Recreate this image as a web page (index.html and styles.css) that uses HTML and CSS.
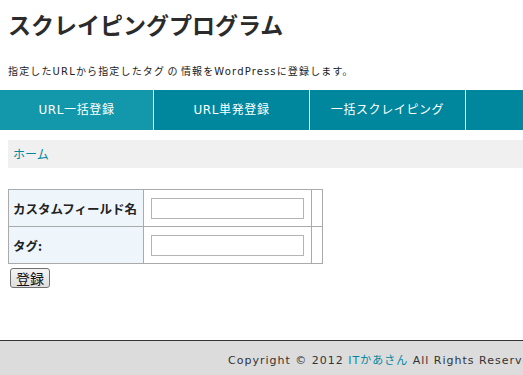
FILE: index.html
```html
<!DOCTYPE html>
<html lang="ja">
<head>
<meta charset="utf-8">
<title>スクレイピングプログラム</title>
<link rel="stylesheet" href="styles.css">
</head>
<body>
<header class="site-header">
  <h1 class="site-title">スクレイピングプログラム</h1>
  <p class="site-desc">指定したURLから指定したタグ の 情報をWordPressに登録します。</p>
</header>
<nav class="gnav">
  <a class="gnav-item is-current" href="#">URL一括登録</a>
  <a class="gnav-item" href="#">URL単発登録</a>
  <a class="gnav-item" href="#">一括スクレイピング</a>
  <a class="gnav-item gnav-empty" href="#"></a>
</nav>
<div class="crumbs"><a href="#">ホーム</a></div>
<main class="content">
  <form class="reg-form">
    <table class="form-table">
      <tr>
        <th>カスタムフィールド名</th>
        <td class="cell-input"><input type="text" class="txt"></td>
        <td class="cell-extra"></td>
      </tr>
      <tr>
        <th>タグ:</th>
        <td class="cell-input"><input type="text" class="txt"></td>
        <td class="cell-extra"></td>
      </tr>
    </table>
    <button type="button" class="btn">登録</button>
  </form>
</main>
<footer class="site-footer">
  <p class="copy">Copyright © 2012 <a href="#">ITかあさん</a> All Rights Reserved.</p>
</footer>
</body>
</html>
```
FILE: styles.css
```css
html, body {
  margin: 0;
  padding: 0;
  background: #fff;
}
body {
  width: 523px;
  height: 375px;
  overflow: hidden;
  font-family: "DejaVu Sans", "Noto Sans CJK JP", sans-serif;
  color: #333;
}
a { color: #00879e; text-decoration: none; }

.site-header {
  padding: 9px 8px 0;
  height: 90px;
  box-sizing: border-box;
}
.site-title {
  margin: 0;
  font-family: "Noto Sans CJK JP", sans-serif;
  font-size: 23px;
  line-height: 30px;
  font-weight: bold;
  color: #2b2b2b;
}
.site-desc {
  margin: 25px 0 0;
  font-size: 10px;
  line-height: 16px;
  letter-spacing: 1.15px;
  word-spacing: -2px;
  color: #222;
}

.gnav {
  display: flex;
  height: 40px;
  background: #00879e;
  white-space: nowrap;
}
.gnav-item {
  flex: 0 0 155px;
  border-left: 1px solid #fff;
  color: #fff;
  font-size: 12px;
  line-height: 40px;
  text-align: center;
  letter-spacing: 0.6px;
}
.gnav-item.is-current {
  flex-basis: 153px;
  border-left: 0;
  background: #1397ab;
}

.crumbs {
  margin: 10px 0 0 8px;
  height: 28px;
  background: #f0f0f0;
  padding-left: 5px;
  font-size: 12px;
  line-height: 30px;
}

.content {
  padding: 21px 0 0 8px;
  height: 152px;
  box-sizing: border-box;
}
.form-table {
  border-collapse: collapse;
}
.form-table th,
.form-table td {
  border: 1px solid #aaa;
  height: 37px;
  padding: 0;
  box-sizing: border-box;
}
.form-table th {
  width: 135px;
  background: #eef6fc;
  text-align: left;
  padding-left: 4px;
  font-family: "Noto Sans CJK JP", sans-serif;
  font-size: 12.5px;
  font-weight: bold;
  color: #222;
}
.cell-input {
  width: 168px;
  padding-left: 7px !important;
}
.cell-extra { width: 11px; }
.txt {
  display: block;
  width: 153px;
  height: 21px;
  box-sizing: border-box;
  border: 1px solid #b4b4b4;
  margin: 0;
  padding: 0 2px;
}
.btn {
  display: block;
  margin: 4px 0 0 2px;
  width: 40px;
  height: 20px;
  padding: 0;
  border: 1px solid #707070;
  border-radius: 3px;
  background: linear-gradient(#f4f4f4, #dedede);
  font-family: "Noto Sans CJK JP", sans-serif;
  font-size: 14px;
  line-height: 18px;
  color: #111;
}

.site-footer {
  margin-top: 20px;
  border-top: 1px solid #333;
  background: #dcdcdc;
  height: 40px;
}
.copy {
  margin: 0;
  padding-left: 228px;
  white-space: nowrap;
  font-size: 11px;
  line-height: 40px;
  letter-spacing: 1px;
  color: #333;
}
```
